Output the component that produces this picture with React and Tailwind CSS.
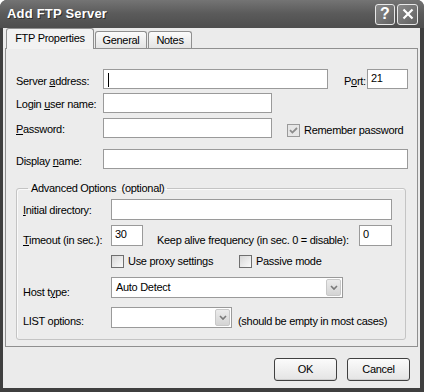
import React from 'react';

const font = { fontFamily: '"Liberation Sans", Arial, sans-serif' };

// little underlined access key
function K({ children }) {
  return <span className="underline underline-offset-[1px]">{children}</span>;
}

function Field({ w, value, cursor }) {
  return (
    <div className={`${w} h-[20px] shrink-0 border border-[#9a9a9a] bg-white pl-[3px] pt-[1px] text-[11px] leading-[14px] text-black`}>
      {cursor && <span className="mt-[2px] ml-[1px] block h-[14px] w-[1px] bg-black" />}
      {value}
    </div>
  );
}

function Check({ checked }) {
  return (
    <div
      className={`flex h-[13px] w-[13px] shrink-0 items-center justify-center border ${
        checked ? 'border-[#9a9a9a] bg-[#e6e6e6]' : 'border-[#6f6f6f] bg-gradient-to-br from-[#d8d8d8] to-[#fafafa]'
      }`}
    >
      {checked && (
        <svg width="9" height="9" viewBox="0 0 9 9">
          <path d="M1 4.2 L3.4 6.6 L8 2" fill="none" stroke="#8c8c8c" strokeWidth="1.8" />
        </svg>
      )}
    </div>
  );
}

function Combo({ w, value }) {
  return (
    <div className={`${w} flex h-[21px] shrink-0 items-stretch border border-[#9a9a9a] bg-white p-[1px]`}>
      <div className="flex-1 pl-[3px] pt-[1px] text-[11px] leading-[15px] text-black">{value}</div>
      <div className="flex w-[15px] items-center justify-center rounded-[2px] border border-[#c8c8c8] bg-gradient-to-b from-[#ececec] to-[#d4d4d4]">
        <svg width="8" height="6" viewBox="0 0 8 6">
          <path d="M1 1 L4 4 L7 1" fill="none" stroke="#7a7a7a" strokeWidth="1.6" />
        </svg>
      </div>
    </div>
  );
}

function Btn({ children }) {
  return (
    <div className="flex h-[23px] w-[63px] items-center justify-center rounded-[3px] border border-[#404040] bg-gradient-to-b from-[#fbfbfb] to-[#e4e4e4] text-[11px] text-black shadow-[inset_0_-1px_0_#cfcfcf]">
      {children}
    </div>
  );
}

export default function App() {
  return (
    <div className="flex h-[392px] w-[424px] flex-col overflow-hidden rounded-t-[7px] bg-[#3f3f3f]" style={font}>
      {/* title bar */}
      <div className="flex h-[28px] shrink-0 items-center bg-gradient-to-b from-[#747474] via-[#5a5a5a] to-[#4e4e4e] pl-[7px] pr-[6px]">
        <div
          className="text-[13px] font-bold tracking-[0.2px] text-white"
          style={{ textShadow: '1px 1px 0 #2e2e2e' }}
        >
          Add FTP Server
        </div>
        <div className="ml-auto flex gap-[2px]">
          <div className="flex h-[21px] w-[20px] items-center justify-center rounded-[3px] border border-[#e8e8e8] bg-gradient-to-br from-[#8a8a8a] to-[#626262]">
            <span className="text-[16px] leading-none font-bold text-white">?</span>
          </div>
          <div className="flex h-[21px] w-[21px] items-center justify-center rounded-[3px] border border-[#e8e8e8] bg-gradient-to-br from-[#8a8a8a] to-[#626262]">
            <svg width="12" height="12" viewBox="0 0 12 12">
              <path d="M1.5 1.5 L10.5 10.5 M10.5 1.5 L1.5 10.5" stroke="#fff" strokeWidth="2.2" />
            </svg>
          </div>
        </div>
      </div>

      {/* body */}
      <div className="ml-[3px] mr-[4px] mb-[4px] flex flex-1 flex-col bg-[#ebebeb] text-[11px] tracking-[-0.3px] whitespace-nowrap text-black">
        {/* tabs */}
        <div className="flex h-[20px] items-end pl-[3px]">
          <div className="relative z-10 -mb-[1px] flex h-[21px] w-[88px] items-center justify-center rounded-t-[3px] border border-b-0 border-[#8f8f8f] bg-[#f2f2f2] pb-[2px] text-[11px]">
            FTP Properties
          </div>
          <div className="ml-[1px] flex h-[17px] w-[52px] items-center justify-center rounded-t-[3px] border border-b-0 border-[#8f8f8f] bg-gradient-to-b from-[#fbfbfb] to-[#e4e4e4]">
            General
          </div>
          <div className="ml-[1px] flex h-[17px] w-[44px] items-center justify-center rounded-t-[3px] border border-b-0 border-[#8f8f8f] bg-gradient-to-b from-[#fbfbfb] to-[#e4e4e4]">
            Notes
          </div>
        </div>

        {/* panel */}
        <div className="ml-[2px] h-[299px] w-[413px] border border-[#8f8f8f] bg-[#ececec] pl-[10px] pt-[20px]">
          <div className="flex h-[20px] items-center">
            <div className="mt-[4px] w-[87px]">
              Server <K>a</K>ddress:
            </div>
            <Field w="w-[225px]" cursor />
            <div className="ml-[16px] mt-[4px] w-[23px]">
              P<K>o</K>rt:
            </div>
            <Field w="w-[41px]" value="21" />
          </div>

          <div className="mt-[4px] flex h-[20px] items-center">
            <div className="mt-[3px] w-[87px]">
              Login <K>u</K>ser name:
            </div>
            <Field w="w-[169px]" />
          </div>

          <div className="mt-[5px] flex h-[20px] items-center">
            <div className="mt-[3px] w-[87px]">
              <K>P</K>assword:
            </div>
            <Field w="w-[169px]" />
            <div className="ml-[15px] mt-[5px] flex items-center gap-[4px]">
              <Check checked />
              <span>Remember password</span>
            </div>
          </div>

          <div className="mt-[11px] flex h-[20px] items-center">
            <div className="mt-[5px] w-[87px]">
              Display <K>n</K>ame:
            </div>
            <Field w="w-[305px]" />
          </div>

          {/* advanced group */}
          <fieldset className="mt-[12px] h-[159px] w-[390px] rounded-[3px] border border-[#c4c4c4] pl-[6px] shadow-[inset_1px_1px_0_#fafafa]">
            <legend className="ml-[5px] px-[3px] text-[11px] leading-[14px]">Advanced Options&nbsp; (optional)</legend>

            <div className="mt-[4px] flex h-[21px] items-center">
              <div className="mt-[2px] w-[88px]">
                <K>I</K>nitial directory:
              </div>
              <Field w="w-[281px] h-[21px]" />
            </div>

            <div className="mt-[5px] flex h-[21px] items-center">
              <div className="mt-[9px] w-[88px]">
                <K>T</K>imeout (in sec.):
              </div>
              <Field w="w-[32px] h-[21px]" value="30" />
              <div className="ml-[14px] mt-[9px] w-[202px]">Keep alive frequency (in sec. 0 = disable):</div>
              <Field w="w-[33px] h-[21px]" value="0" />
            </div>

            <div className="mt-[9px] flex h-[13px] items-center pl-[88px]">
              <div className="flex w-[128px] items-center gap-[4px]">
                <Check />
                <span>Use proxy settings</span>
              </div>
              <div className="flex items-center gap-[4px]">
                <Check />
                <span>Passive mode</span>
              </div>
            </div>

            <div className="mt-[9px] flex h-[21px] items-center">
              <div className="mt-[10px] w-[88px]">
                Host t<K>y</K>pe:
              </div>
              <Combo w="w-[232px]" value="Auto Detect" />
            </div>

            <div className="mt-[9px] flex h-[21px] items-center">
              <div className="mt-[8px] w-[88px]">LIST options:</div>
              <Combo w="w-[121px]" />
              <div className="ml-[6px] mt-[8px]">(should be empty in most cases)</div>
            </div>
          </fieldset>
        </div>

        {/* buttons */}
        <div className="mt-[11px] flex justify-end gap-[10px] pr-[10px]">
          <Btn>OK</Btn>
          <Btn>Cancel</Btn>
        </div>
      </div>
    </div>
  );
}
